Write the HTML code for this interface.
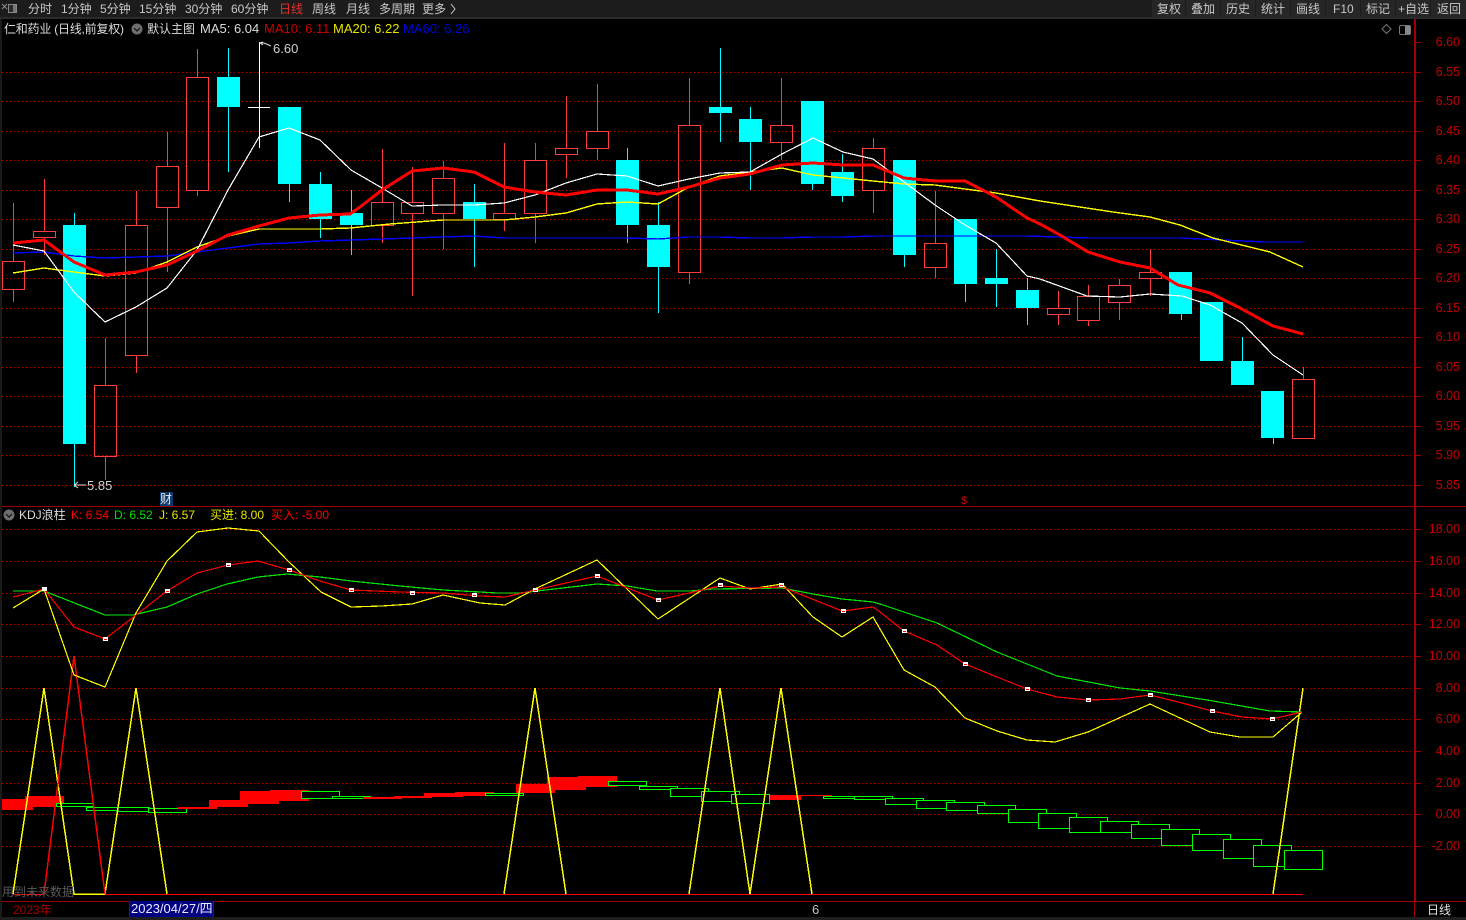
<!DOCTYPE html>
<html><head><meta charset="utf-8"><title>KDJ</title>
<style>
html,body{margin:0;padding:0;background:#000;width:1466px;height:920px;overflow:hidden}
svg{display:block;position:absolute;left:0;top:0}
text{font-family:"Liberation Sans","Noto Sans CJK SC",sans-serif;font-size:12px}
.n{font-size:13px}
.ax text{fill:#c00000;font-size:12.5px;text-anchor:end}
.tb text{fill:#c8c8c8;font-size:12px}
polyline{shape-rendering:crispEdges}
</style></head><body>
<svg width="1466" height="920" viewBox="0 0 1466 920" xmlns="http://www.w3.org/2000/svg">
<rect width="1466" height="920" fill="#000"/>
<!-- top bar -->
<rect x="0" y="0" width="1466" height="17" fill="#1c1c1c"/>
<rect x="0" y="17" width="1466" height="2" fill="#2b2b2b"/>
<rect x="0" y="19" width="2" height="901" fill="#1a1a1a"/>
<g shape-rendering="crispEdges">
<rect x="1152" y="0" width="33" height="17" fill="#262626"/><rect x="1186" y="0" width="34" height="17" fill="#262626"/><rect x="1221" y="0" width="34" height="17" fill="#262626"/><rect x="1256" y="0" width="34" height="17" fill="#262626"/><rect x="1291" y="0" width="34" height="17" fill="#262626"/><rect x="1326" y="0" width="34" height="17" fill="#262626"/><rect x="1361" y="0" width="34" height="17" fill="#262626"/><rect x="1396" y="0" width="34" height="17" fill="#262626"/><rect x="1431" y="0" width="35" height="17" fill="#262626"/>
</g>
<g fill="none" stroke="#8a8a8a" stroke-width="1"><path d="M2 4L7 9M7 4L2 9"/><rect x="8.5" y="4.5" width="8" height="8" fill="#2a2a2a"/><rect x="13" y="5" width="3" height="7" fill="#777" stroke="none"/></g>
<g class="tb">
<text x="28" y="13">分时</text><text x="61" y="13">1分钟</text><text x="100" y="13">5分钟</text><text x="139" y="13">15分钟</text><text x="185" y="13">30分钟</text><text x="231" y="13">60分钟</text><text x="279" y="13" style="fill:#e03030">日线</text><text x="312" y="13">周线</text><text x="346" y="13">月线</text><text x="379" y="13">多周期</text><text x="422" y="13">更多</text>
<path d="M451 4L455 9L451 14" fill="none" stroke="#c8c8c8"/>
<text x="1157" y="13">复权</text><text x="1191" y="13">叠加</text><text x="1226" y="13">历史</text><text x="1261" y="13">统计</text><text x="1296" y="13">画线</text><text x="1333" y="13">F10</text><text x="1366" y="13">标记</text><text x="1398" y="13">+自选</text><text x="1437" y="13">返回</text>
</g>
<!-- grid -->
<g stroke="#b00000" stroke-width="1" stroke-dasharray="1 3" shape-rendering="crispEdges">
<path d="M2 72.5H1414M2 101.5H1414M2 131.5H1414M2 160.5H1414M2 190.5H1414M2 219.5H1414M2 249.5H1414M2 278.5H1414M2 308.5H1414M2 337.5H1414M2 367.5H1414M2 396.5H1414M2 426.5H1414M2 455.5H1414M2 485.5H1414"/>
<path d="M2 529.5H1414M2 561.5H1414M2 593.5H1414M2 624.5H1414M2 656.5H1414M2 688.5H1414M2 719.5H1414M2 751.5H1414M2 783.5H1414M2 814.5H1414M2 846.5H1414"/>
</g>
<!-- frame lines -->
<g shape-rendering="crispEdges" fill="#a00000">
<rect x="1414" y="19" width="2" height="882"/>
<rect x="2" y="506" width="1464" height="1"/>
<rect x="2" y="901" width="1464" height="1"/>
<rect x="1414" y="902" width="1" height="15"/>
</g>
<path d="M1416 42.5h5M1416 72.5h5M1416 101.5h5M1416 131.5h5M1416 160.5h5M1416 190.5h5M1416 219.5h5M1416 249.5h5M1416 278.5h5M1416 308.5h5M1416 337.5h5M1416 367.5h5M1416 396.5h5M1416 426.5h5M1416 455.5h5M1416 485.5h5M1416 529.5h5M1416 561.5h5M1416 593.5h5M1416 624.5h5M1416 656.5h5M1416 688.5h5M1416 719.5h5M1416 751.5h5M1416 783.5h5M1416 814.5h5M1416 846.5h5" stroke="#a00000" shape-rendering="crispEdges"/>
<g class="ax">
<text x="1460" y="46">6.60</text><text x="1460" y="76">6.55</text><text x="1460" y="105">6.50</text><text x="1460" y="135">6.45</text><text x="1460" y="164">6.40</text><text x="1460" y="194">6.35</text><text x="1460" y="223">6.30</text><text x="1460" y="253">6.25</text><text x="1460" y="282">6.20</text><text x="1460" y="312">6.15</text><text x="1460" y="341">6.10</text><text x="1460" y="371">6.05</text><text x="1460" y="400">6.00</text><text x="1460" y="430">5.95</text><text x="1460" y="459">5.90</text><text x="1460" y="489">5.85</text>
<text x="1460" y="533">18.00</text><text x="1460" y="565">16.00</text><text x="1460" y="597">14.00</text><text x="1460" y="628">12.00</text><text x="1460" y="660">10.00</text><text x="1460" y="692">8.00</text><text x="1460" y="723">6.00</text><text x="1460" y="755">4.00</text><text x="1460" y="787">2.00</text><text x="1460" y="818">0.00</text><text x="1460" y="850">-2.00</text>
</g>
<!-- candles: red -->
<g shape-rendering="crispEdges">
<path fill="none" stroke="#ff3c3c" stroke-width="1" d="M13.5 203V261M13.5 290V302M44.5 179V231M44.5 238V255M105.5 338V385M105.5 457V480M136.5 191V225M136.5 356V373M167.5 132V166M167.5 208V272M197.5 49V77M197.5 191V196M382.5 149V202M382.5 226V243M412.5 167V202M412.5 214V296M443.5 161V178M443.5 214V249M504.5 143V213M504.5 220V231M535.5 143V160M535.5 214V243M566.5 96V148M566.5 155V178M597.5 84V131M597.5 149V160M689.5 78V125M689.5 273V284M781.5 78V125M781.5 143V160M873.5 138V148M873.5 191V213M935.5 191V243M935.5 268V278M1058.5 291V308M1058.5 315V325M1088.5 285V296M1088.5 321V326M1119.5 279V285M1119.5 303V320M1150.5 249V272M1150.5 279V296M1303.5 367V379"/>
<path fill="none" stroke="#ff3c3c" stroke-width="1" d="M2.5 261.5h22v28h-22zM33.5 231.5h22v6h-22zM94.5 385.5h22v71h-22zM125.5 225.5h22v130h-22zM156.5 166.5h22v41h-22zM186.5 77.5h22v113h-22zM371.5 202.5h22v23h-22zM401.5 202.5h22v11h-22zM432.5 178.5h22v35h-22zM493.5 213.5h22v6h-22zM524.5 160.5h22v53h-22zM555.5 148.5h22v6h-22zM586.5 131.5h22v17h-22zM678.5 125.5h22v147h-22zM770.5 125.5h22v17h-22zM862.5 148.5h22v42h-22zM924.5 243.5h22v24h-22zM1047.5 308.5h22v6h-22zM1077.5 296.5h22v24h-22zM1108.5 285.5h22v17h-22zM1139.5 272.5h22v6h-22zM1292.5 379.5h22v59h-22z"/>
<!-- cyan -->
<path fill="none" stroke="#00ffff" stroke-width="1" d="M74.5 213V487M228.5 48V172M289.5 107V202M320.5 172V238M351.5 190V255M474.5 184V267M627.5 148V243M658.5 202V313M720.5 48V142M750.5 107V190M812.5 101V190M842.5 154V202M904.5 160V267M965.5 219V302M996.5 249V307M1027.5 278V325M1181.5 272V320M1242.5 337V385M1273.5 391V444"/>
<g fill="#00ffff">
<rect x="63" y="225" width="23" height="219"/><rect x="217" y="77" width="23" height="30"/><rect x="278" y="107" width="23" height="77"/><rect x="309" y="184" width="23" height="35"/><rect x="340" y="213" width="23" height="12"/><rect x="463" y="202" width="23" height="17"/><rect x="616" y="160" width="23" height="65"/><rect x="647" y="225" width="23" height="42"/><rect x="709" y="107" width="23" height="6"/><rect x="739" y="119" width="23" height="23"/><rect x="801" y="101" width="23" height="83"/><rect x="831" y="172" width="23" height="24"/><rect x="893" y="160" width="23" height="95"/><rect x="954" y="219" width="23" height="65"/><rect x="985" y="278" width="23" height="6"/><rect x="1016" y="290" width="23" height="18"/><rect x="1169" y="272" width="23" height="42"/><rect x="1200" y="302" width="23" height="59"/><rect x="1231" y="361" width="23" height="24"/><rect x="1261" y="391" width="23" height="47"/>
</g>
<!-- doji white -->
<path fill="none" stroke="#fff" d="M259.5 42V148M248 107.5H270"/>
</g>
<!-- high/low labels -->
<path d="M260 43h4M260 43l3 -1M260 43l3 2M264 43l7 3" fill="none" stroke="#ddd" stroke-width="1"/>
<text x="273" y="53" class="n" fill="#d0d0d0">6.60</text>
<path d="M74 485h12M74 485l4 -3M74 485l4 3" fill="none" stroke="#ddd"/>
<text x="87" y="490" class="n" fill="#d0d0d0">5.85</text>
<!-- MA lines -->
<g fill="none" stroke-linejoin="round">
<polyline stroke="#0000ff" stroke-width="1.4" points="13,253 44,252 74,256 105,258 136,257 167,256 197,252 228,248 259,244 289,243 320,241 351,240 382,239 412,238 443,237 474,236 504,238 535,238 566,238 597,238 627,238 658,239 689,237 720,237 750,238 781,238 812,237 843,237 873,236 904,236 935,236 965,236 996,236 1027,236 1058,237 1088,238 1119,238 1150,238 1181,238 1222,240 1265,242 1303,242"/>
<polyline stroke="#ffff00" stroke-width="1.4" points="13,273 44,268 74,272 105,276 136,273 167,262 197,247 228,236 259,229 289,229 320,229 350,228 360,227 390,224 443,220 504,220 535,217 566,213 597,204 627,202 658,204 689,187 720,176 750,172 782,168 813,175 843,178 873,181 904,184 935,185 965,189 996,193 1040,201 1113,212 1150,217 1180,225 1213,238 1270,252 1303,267"/>
<polyline stroke="#ffffff" stroke-width="1.2" points="13,245 44,251 74,292 105,322 136,307 167,288 197,250 228,190 259,137 289,128 320,140 351,170 382,188 412,206 443,205 474,205 504,203 535,195 566,183 597,174 627,176 658,186 689,179 720,173 750,172 782,154 813,138 843,152 873,159 904,182 935,205 965,225 996,243 1027,276 1040,279 1087,296 1120,297 1150,294 1182,296 1210,305 1242,323 1273,355 1303,375"/>
<polyline stroke="#ff0000" stroke-width="3" points="13,243 44,240 74,262 105,275 136,272 167,265 197,251 228,235 259,226 289,218 320,215 350,214 360,207 382,190 412,171 443,168 474,172 504,187 535,192 566,195 597,190 627,190 658,194 689,187 720,178 750,174 782,165 813,163 843,165 873,165 904,178 935,181 965,181 996,197 1027,218 1040,224 1060,235 1088,252 1120,262 1150,268 1178,285 1210,293 1240,308 1273,326 1303,334"/>
</g>
<!-- headers -->
<text x="4" y="33" fill="#dcdcdc" textLength="120" lengthAdjust="spacing">仁和药业 (日线,前复权)</text>
<circle cx="137" cy="29" r="5.5" fill="#6e6e6e"/><path d="M134 28l3 3l3 -3" fill="none" stroke="#111" stroke-width="1.2"/>
<text x="147" y="33" fill="#dcdcdc">默认主图</text>
<text x="200" y="33" class="n" fill="#dcdcdc">MA5: 6.04</text>
<text x="264" y="33" class="n" fill="#c80000">MA10: 6.11</text>
<text x="333" y="33" class="n" fill="#e6e600">MA20: 6.22</text>
<text x="403" y="33" class="n" fill="#0000e0">MA60: 6.26</text>
<path d="M1386.5 24.5L1391 29L1386.5 33.5L1382 29Z" fill="none" stroke="#777"/>
<rect x="1399.5" y="25.5" width="11" height="9" rx="1.5" fill="none" stroke="#777"/><rect x="1405" y="26" width="5" height="8" fill="#888"/>
<!-- fin marks -->
<rect x="160" y="492" width="13" height="14" fill="#0a3a70"/>
<text x="160" y="503" fill="#e8e8e8">财</text>
<text x="961" y="504" fill="#d00000" style="font-size:11px">$</text>
<!-- KDJ header -->
<circle cx="9" cy="515" r="5.5" fill="#6e6e6e"/><path d="M6 514l3 3l3 -3" fill="none" stroke="#111" stroke-width="1.2"/>
<text x="19" y="519" fill="#dcdcdc">KDJ浪柱</text>
<text x="71" y="519" fill="#ff0000">K: 6.54</text>
<text x="114" y="519" fill="#00e000">D: 6.52</text>
<text x="159" y="519" fill="#e6e600">J: 6.57</text>
<text x="210" y="519" fill="#e6e600">买进: 8.00</text>
<text x="271" y="519" fill="#ff0000">买入: -5.00</text>
<!-- histogram -->
<g shape-rendering="crispEdges" stroke-width="1">
<g fill="#ff0000" stroke="none"><rect x="2" y="799" width="31" height="11"/><rect x="25" y="796" width="39" height="11"/></g>
<g fill="#000" stroke="#00ff00"><rect x="56.5" y="803.5" width="37" height="3"/><rect x="86.5" y="807.5" width="32" height="3"/><rect x="117.5" y="807.5" width="32" height="4"/><rect x="148.5" y="808.5" width="38" height="4"/></g>
<g fill="#ff0000" stroke="none"><rect x="178" y="807" width="39" height="2"/><rect x="209" y="800" width="39" height="7"/><rect x="240" y="791" width="39" height="13"/><rect x="270" y="790" width="39" height="11"/></g>
<g fill="#000" stroke="#00ff00"><rect x="301.5" y="791.5" width="38" height="7"/><rect x="332.5" y="796.5" width="38" height="2"/></g>
<g fill="#ff0000" stroke="none"><rect x="363" y="797" width="39" height="2"/><rect x="394" y="796" width="38" height="2"/><rect x="424" y="793" width="39" height="4"/><rect x="455" y="792" width="39" height="4"/></g>
<g fill="#000" stroke="#00ff00"><rect x="485.5" y="793.5" width="38" height="2"/></g>
<g fill="#ff0000" stroke="none"><rect x="516" y="784" width="39" height="9"/><rect x="547" y="777" width="39" height="13"/><rect x="578" y="776" width="39" height="11"/></g>
<g fill="#000" stroke="#00ff00"><rect x="608.5" y="781.5" width="38" height="4"/><rect x="639.5" y="786.5" width="38" height="3"/><rect x="670.5" y="788.5" width="38" height="8"/><rect x="701.5" y="791.5" width="38" height="10"/></g>
<rect x="763" y="795" width="38" height="5" fill="#ff0000"/><rect x="801" y="795" width="31" height="1" fill="#ff0000"/>
<g fill="#000" stroke="#00ff00"><rect x="731.5" y="794.5" width="38" height="9"/><rect x="823.5" y="796.5" width="31" height="2"/><rect x="854.5" y="796.5" width="38" height="3"/><rect x="885.5" y="798.5" width="38" height="6"/><rect x="916.5" y="800.5" width="38" height="8"/><rect x="946.5" y="802.5" width="38" height="8"/><rect x="977.5" y="805.5" width="38" height="8"/><rect x="1008.5" y="809.5" width="38" height="13"/><rect x="1038.5" y="813.5" width="38" height="15"/><rect x="1069.5" y="817.5" width="38" height="15"/><rect x="1100.5" y="821.5" width="38" height="11"/><rect x="1131.5" y="824.5" width="38" height="14"/><rect x="1161.5" y="829.5" width="38" height="16"/><rect x="1192.5" y="834.5" width="38" height="16"/><rect x="1223.5" y="839.5" width="38" height="19"/><rect x="1253.5" y="845.5" width="38" height="21"/><rect x="1284.5" y="850.5" width="38" height="19"/></g>
</g>
<!-- KDJ signal lines -->
<g fill="none" stroke-width="1.5">
<polyline stroke="#ffff00" points="13,894 44,688 74,894 105,894 136,688 167,894"/>
<polyline stroke="#ffff00" points="504,894 535,688 566,894"/>
<polyline stroke="#ffff00" points="689,894 720,688 750,894 781,688 812,894"/>
<polyline stroke="#ffff00" points="1273,894 1303,688"/>
<polyline stroke="#ff0000" points="44,894 74,656 105,894"/>
<path d="M105 894.5H1303M13 894.5H44" stroke="#ff0000" stroke-width="1" shape-rendering="crispEdges"/>
<path d="M74 894.5H105" stroke="#ffff00" stroke-width="1" shape-rendering="crispEdges"/>
<!-- D -->
<polyline stroke="#00e600" stroke-width="1.2" points="13,591 44,591 105,615 133,615 167,607 197,594 227,584 258,577 287,574 320,577 351,581 400,586 443,590 480,592 497,593 520,593 597,584 627,586 657,591 690,591 713,589 782,588 813,594 842,599 873,602 880,604 937,623 997,652 1057,676 1120,688 1150,691 1213,701 1270,711 1302,712"/>
<!-- J -->
<polyline stroke="#ffff00" stroke-width="1.2" points="13,608 44,589 74,675 105,687 136,613 167,561 197,532 228,528 259,531 289,562 321,592 351,607 382,606 412,604 443,595 480,603 505,605 535,589 597,560 658,619 720,578 750,589 782,584 813,617 842,637 873,617 880,629 904,670 935,687 965,718 997,731 1027,740 1055,742 1088,732 1150,704 1210,732 1240,737 1273,737 1302,712"/>
<!-- K -->
<polyline stroke="#ff0000" stroke-width="1.2" points="13,597 44,589 74,627 105,639 167,591 197,573 228,565 258,561 289,570 320,581 351,590 400,592 443,593 480,596 505,597 535,590 597,576 658,600 720,586 750,588 782,587 842,611 873,607 880,612 904,631 937,645 965,664 997,677 1027,689 1057,697 1088,700 1120,699 1150,695 1182,703 1212,711 1242,717 1272,719 1302,712"/>
</g>
<!-- K markers -->
<g fill="#fff" shape-rendering="crispEdges">
<rect x="42" y="587" width="5" height="4"/><rect x="103" y="637" width="5" height="4"/><rect x="165" y="589" width="5" height="4"/><rect x="226" y="563" width="5" height="4"/><rect x="287" y="568" width="5" height="4"/><rect x="349" y="588" width="5" height="4"/><rect x="410" y="591" width="5" height="4"/><rect x="472" y="593" width="5" height="4"/><rect x="533" y="588" width="5" height="4"/><rect x="595" y="574" width="5" height="4"/><rect x="656" y="598" width="5" height="4"/><rect x="718" y="583" width="5" height="4"/><rect x="779" y="583" width="5" height="4"/><rect x="841" y="609" width="5" height="4"/><rect x="902" y="629" width="5" height="4"/><rect x="963" y="662" width="5" height="4"/><rect x="1025" y="687" width="5" height="4"/><rect x="1086" y="698" width="5" height="4"/><rect x="1148" y="693" width="5" height="4"/><rect x="1210" y="709" width="5" height="4"/><rect x="1270" y="717" width="5" height="4"/>
</g>
<g fill="#ff0000" shape-rendering="crispEdges">
<rect x="104" y="639" width="3" height="1"/><rect x="166" y="591" width="3" height="1"/><rect x="227" y="565" width="3" height="1"/><rect x="288" y="570" width="3" height="1"/><rect x="350" y="590" width="3" height="1"/><rect x="411" y="593" width="3" height="1"/><rect x="473" y="595" width="3" height="1"/><rect x="534" y="590" width="3" height="1"/><rect x="596" y="576" width="3" height="1"/><rect x="657" y="600" width="3" height="1"/><rect x="719" y="585" width="3" height="1"/><rect x="780" y="585" width="3" height="1"/><rect x="842" y="611" width="3" height="1"/><rect x="903" y="631" width="3" height="1"/><rect x="964" y="664" width="3" height="1"/><rect x="1026" y="689" width="3" height="1"/><rect x="1087" y="700" width="3" height="1"/><rect x="1149" y="695" width="3" height="1"/><rect x="1211" y="711" width="3" height="1"/><rect x="1271" y="719" width="3" height="1"/>
</g>
<!-- warning text -->
<text x="2" y="896" fill="#5a5a5a">用到未来数据</text>
<!-- bottom axis -->
<text x="13" y="914" fill="#a00000" style="font-size:12px">2023年</text>
<rect x="129" y="901" width="85" height="16" fill="#000080"/>
<rect x="129" y="901" width="1" height="16" fill="#800000"/><rect x="213" y="901" width="1" height="16" fill="#800000"/>
<text x="131" y="913" class="n" fill="#e8e8ff">2023/04/27/四</text>
<text x="812" y="914" class="n" fill="#c0c0c0">6</text>
<text x="1427" y="914" fill="#e0e0e0">日线</text>
<rect x="0" y="917" width="1466" height="3" fill="#1e1e1e"/>
</svg>
</body></html>
